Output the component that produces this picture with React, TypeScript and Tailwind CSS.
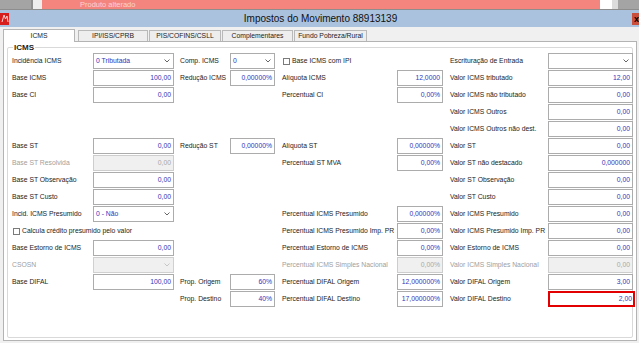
import React from "react";

const VAL = "text-[#3434b8]";

function Lbl({ t, d, pl = 0 }: { t?: string; d?: boolean; pl?: number }) {
  const pad = pl === 6 ? "pl-[6px]" : pl === 7 ? "pl-[7px]" : "";
  return (
    <div className={`h-[16px] leading-[16px] whitespace-nowrap ${pad} ${d ? "text-[#a0a0a0]" : ""}`}>
      {t}
    </div>
  );
}

function Inp({ v, d, red }: { v: string; d?: boolean; red?: boolean }) {
  if (red) {
    return (
      <div className={`h-[16px] w-[87px] border-2 border-[#e30000] bg-white text-right pr-[1px] leading-[12px] ${VAL}`}>
        {v}
      </div>
    );
  }
  return (
    <div
      className={`h-[16px] border border-[#acacac] text-right pr-[2px] leading-[14px] ${
        d ? "bg-[#f0f0f0] text-[#a8a8a8] border-[#cdcdcd]" : `bg-white ${VAL}`
      }`}
    >
      {v}
    </div>
  );
}

function Chevron({ d }: { d?: boolean }) {
  return (
    <svg width="6" height="4" viewBox="0 0 6 4" className="shrink-0">
      <path d="M0.5 0.5 L3 3 L5.5 0.5" fill="none" stroke={d ? "#c0c0c0" : "#555"} strokeWidth="0.9" />
    </svg>
  );
}

function Sel({ v, d }: { v: string; d?: boolean }) {
  return (
    <div
      className={`h-[16px] border flex items-center pl-[2px] pr-[3px] ${
        d ? "bg-[#f0f0f0] border-[#d0d0d0]" : `bg-white border-[#acacac] ${VAL}`
      }`}
    >
      <span className="flex-1 whitespace-nowrap">{v}</span>
      <Chevron d={d} />
    </div>
  );
}

function Chk({ t }: { t: string }) {
  return (
    <div className="h-[16px] flex items-center gap-[2px] whitespace-nowrap">
      <div className="w-[7px] h-[7px] border border-[#7a7a7a] bg-white" />
      <span>{t}</span>
    </div>
  );
}

const E = () => <div />;

function Row({ children }: { children: React.ReactNode }) {
  return (
    <div className="grid grid-cols-[81px_81px_56px_45px_122px_46px_105px_85px] h-[17px] items-start">
      {children}
    </div>
  );
}

function Tab({ t, active, w }: { t: string; active?: boolean; w: string }) {
  return (
    <div
      className={`${w} flex items-center justify-center border border-b-0 whitespace-nowrap ${
        active
          ? "h-[13px] bg-white border-[#b5b5b5] -mb-[1px] relative z-10"
          : "h-[11px] bg-[#eeeeee] border-[#b9b9b9]"
      }`}
    >
      {t}
    </div>
  );
}

export default function App() {
  return (
    <div className="w-[639px] h-[343px] overflow-hidden bg-[#f0f0f0] font-['Liberation_Sans',Arial,sans-serif] text-[6.8px] leading-[1.3] text-[#1c1c1c]">
      {/* top strip */}
      <div className="flex h-[10px] border-b border-[#8d8d8d]">
        <div className="w-[31px] bg-[#a4a4a4]" />
        <div className="w-[2px] bg-[#8e8e8e]" />
        <div className="w-[9px] bg-[#ededed]" />
        <div className="flex-1 bg-[#f4857e] pl-[38px] overflow-hidden">
          <div className="text-[7.5px] leading-[9px] text-[#fbd3cf]">Produto alterado</div>
        </div>
        <div className="w-[12px] bg-white" />
        <div className="w-[6px] bg-[#dcdcdc]" />
        <div className="flex-1 max-w-[21px] bg-[#a4a4a4]" />
      </div>

      {/* title bar */}
      <div className="h-[17px] bg-[#aac2de] flex items-center">
        <div className="w-[9px] h-[12px] bg-[#d81d1d] flex items-center justify-center">
          <svg width="8" height="9" viewBox="0 0 8 9">
            <path d="M1 8 L3 1 L4.5 5 L6 2 L7 8" fill="none" stroke="#ffd0d0" strokeWidth="1" />
          </svg>
        </div>
        <div className="flex-1 text-center text-[10px] leading-[12px] text-[#111]">Impostos do Movimento 88913139</div>
        <div className="w-[7px] h-[12px] bg-[#c9503c] overflow-hidden pl-[2px] text-[9px] leading-[12px] font-bold text-black">x</div>
      </div>

      {/* tabs */}
      <div className="flex items-end h-[14px] pl-[3px] gap-[1px]">
        <Tab t="ICMS" active w="w-[72px]" />
        <div className="w-[1px]" />
        <Tab t="IPI/ISS/CPRB" w="w-[70px]" />
        <Tab t="PIS/COFINS/CSLL" w="w-[72px]" />
        <Tab t="Complementares" w="w-[71px]" />
        <Tab t="Fundo Pobreza/Rural" w="w-[73px]" />
      </div>

      {/* panel */}
      <div className="ml-[3px] w-[634px] h-[300px] border border-[#b3b3b3] bg-white px-[3px] pt-[5px]">
        <div className="h-[291px] border border-[#d9d9d9] rounded-[2px] pl-[4px]">
          <div className="-mt-[5px] ml-[1px] h-[9px] leading-[9px] text-[8px] font-bold w-fit bg-white px-[1px]">ICMS</div>
          <div className="mt-[1px]">
            <Row>
              <Lbl t="Incidência ICMS" />
              <Sel v="0 Tributada" />
              <Lbl t="Comp. ICMS" pl={6} />
              <Sel v="0" />
              <div className="pl-[8px]"><Chk t="Base ICMS com IPI" /></div>
              <E />
              <Lbl t="Escrituração de Entrada" pl={7} />
              <Sel v="" />
            </Row>
            <Row>
              <Lbl t="Base ICMS" />
              <Inp v="100,00" />
              <Lbl t="Redução ICMS" pl={6} />
              <Inp v="0,00000%" />
              <Lbl t="Alíquota ICMS" pl={7} />
              <Inp v="12,0000" />
              <Lbl t="Valor ICMS tributado" pl={7} />
              <Inp v="12,00" />
            </Row>
            <Row>
              <Lbl t="Base CI" />
              <Inp v="0,00" />
              <E />
              <E />
              <Lbl t="Percentual CI" pl={7} />
              <Inp v="0,00%" />
              <Lbl t="Valor ICMS não tributado" pl={7} />
              <Inp v="0,00" />
            </Row>
            <Row>
              <E /><E /><E /><E /><E /><E />
              <Lbl t="Valor ICMS Outros" pl={7} />
              <Inp v="0,00" />
            </Row>
            <Row>
              <E /><E /><E /><E /><E /><E />
              <Lbl t="Valor ICMS Outros não dest." pl={7} />
              <Inp v="0,00" />
            </Row>
            <Row>
              <Lbl t="Base ST" />
              <Inp v="0,00" />
              <Lbl t="Redução ST" pl={6} />
              <Inp v="0,00000%" />
              <Lbl t="Alíquota ST" pl={7} />
              <Inp v="0,00000%" />
              <Lbl t="Valor ST" pl={7} />
              <Inp v="0,00" />
            </Row>
            <Row>
              <Lbl t="Base ST Resolvida" d />
              <Inp v="0,00" d />
              <E />
              <E />
              <Lbl t="Percentual ST MVA" pl={7} />
              <Inp v="0,00%" />
              <Lbl t="Valor ST não destacado" pl={7} />
              <Inp v="0,000000" />
            </Row>
            <Row>
              <Lbl t="Base ST Observação" />
              <Inp v="0,00" />
              <E /><E /><E /><E />
              <Lbl t="Valor ST Observação" pl={7} />
              <Inp v="0,00" />
            </Row>
            <Row>
              <Lbl t="Base ST Custo" />
              <Inp v="0,00" />
              <E /><E /><E /><E />
              <Lbl t="Valor ST Custo" pl={7} />
              <Inp v="0,00" />
            </Row>
            <Row>
              <Lbl t="Incid. ICMS Presumido" />
              <Sel v="0 - Não" />
              <E />
              <E />
              <Lbl t="Percentual ICMS Presumido" pl={7} />
              <Inp v="0,00000%" />
              <Lbl t="Valor ICMS Presumido" pl={7} />
              <Inp v="0,00" />
            </Row>
            <Row>
              <div className="col-span-4 pl-[1px]"><Chk t="Calcula crédito presumido pelo valor" /></div>
              <Lbl t="Percentual ICMS Presumido Imp. PR" pl={7} />
              <Inp v="0,00%" />
              <Lbl t="Valor ICMS Presumido Imp. PR" pl={7} />
              <Inp v="0,00" />
            </Row>
            <Row>
              <Lbl t="Base Estorno de ICMS" />
              <Inp v="0,00" />
              <E />
              <E />
              <Lbl t="Percentual Estorno de ICMS" pl={7} />
              <Inp v="0,00%" />
              <Lbl t="Valor Estorno de ICMS" pl={7} />
              <Inp v="0,00" />
            </Row>
            <Row>
              <Lbl t="CSOSN" d />
              <Sel v="" d />
              <E />
              <E />
              <Lbl t="Percentual ICMS Simples Nacional" pl={7} d />
              <Inp v="0,00%" d />
              <Lbl t="Valor ICMS Simples Nacional" pl={7} d />
              <Inp v="0,00" d />
            </Row>
            <Row>
              <Lbl t="Base DIFAL" />
              <Inp v="100,00" />
              <Lbl t="Prop. Origem" pl={6} />
              <Inp v="60%" />
              <Lbl t="Percentual DIFAL Origem" pl={7} />
              <Inp v="12,000000%" />
              <Lbl t="Valor DIFAL Origem" pl={7} />
              <Inp v="3,00" />
            </Row>
            <Row>
              <E />
              <E />
              <Lbl t="Prop. Destino" pl={6} />
              <Inp v="40%" />
              <Lbl t="Percentual DIFAL Destino" pl={7} />
              <Inp v="17,000000%" />
              <Lbl t="Valor DIFAL Destino" pl={7} />
              <Inp v="2,00" red />
            </Row>
          </div>
        </div>
      </div>
    </div>
  );
}
